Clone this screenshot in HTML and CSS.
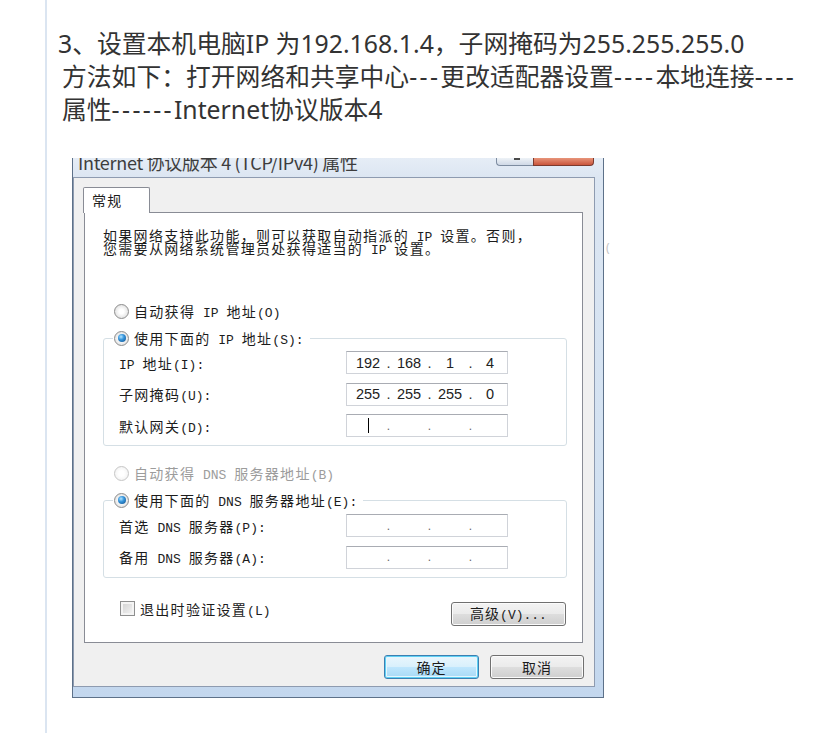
FILE: index.html
```html
<!DOCTYPE html>
<html lang="zh-CN">
<head>
<meta charset="utf-8">
<title>设置本机电脑IP</title>
<link rel="stylesheet" href="styles.css">
</head>
<body>
<div class="page">
  <p class="line">3、设置本机电脑IP 为192.168.1.4，子网掩码为255.255.255.0</p>
  <div class="method">
    <p class="line">方法如下：打开网络和共享中心<span class="dash">---</span>更改适配器设置<span class="dash">----</span>本地连接<span class="dash">----</span></p>
    <p class="line">属性<span class="dash">------</span>Internet协议版本4</p>
  </div>

  <div class="shot">
    <div class="window">
      <div class="titlebar">
        <span class="title">Internet 协议版本 4 (TCP/IPv4) 属性</span>
        <div class="tb-btns">
          <span class="tb-help"><i></i></span>
          <span class="tb-close"></span>
        </div>
      </div>
      <div class="client">
        <div class="tab">常规</div>
        <div class="panel">
          <div class="desc">
            <span class="dl">如果网络支持此功能，则可以获取自动指派的<span class="en"> IP </span>设置。否则，</span>
            <span class="dl">您需要从网络系统管理员处获得适当的<span class="en"> IP </span>设置。</span>
          </div>

          <div class="radio-row r1"><span class="radio"></span><span>自动获得<span class="en"> IP </span>地址<span class="en">(O)</span></span></div>
          <fieldset class="group g1">
            <legend><span class="radio on"></span><span>使用下面的<span class="en"> IP </span>地址<span class="en">(S):</span></span></legend>
            <div class="fields">
              <span class="lbl"><span class="en">IP </span>地址<span class="en">(I):</span></span>
              <div class="ipbox"><span>192</span><span class="dot">.</span><span>168</span><span class="dot">.</span><span>1</span><span class="dot">.</span><span>4</span></div>
              <span class="lbl">子网掩码<span class="en">(U):</span></span>
              <div class="ipbox"><span>255</span><span class="dot">.</span><span>255</span><span class="dot">.</span><span>255</span><span class="dot">.</span><span>0</span></div>
              <span class="lbl">默认网关<span class="en">(D):</span></span>
              <div class="ipbox empty"><span><i class="caret"></i></span><span class="dot">.</span><span></span><span class="dot">.</span><span></span><span class="dot">.</span><span></span></div>
            </div>
          </fieldset>

          <div class="radio-row r3 disabled"><span class="radio"></span><span>自动获得<span class="en"> DNS </span>服务器地址<span class="en">(B)</span></span></div>
          <fieldset class="group g2">
            <legend><span class="radio on"></span><span>使用下面的<span class="en"> DNS </span>服务器地址<span class="en">(E):</span></span></legend>
            <div class="fields">
              <span class="lbl">首选<span class="en"> DNS </span>服务器<span class="en">(P):</span></span>
              <div class="ipbox empty"><span></span><span class="dot">.</span><span></span><span class="dot">.</span><span></span><span class="dot">.</span><span></span></div>
              <span class="lbl">备用<span class="en"> DNS </span>服务器<span class="en">(A):</span></span>
              <div class="ipbox empty"><span></span><span class="dot">.</span><span></span><span class="dot">.</span><span></span><span class="dot">.</span><span></span></div>
            </div>
          </fieldset>

          <div class="bottom-row">
            <div class="check"><span class="box"></span><span>退出时验证设置<span class="en">(L)</span></span></div>
            <button class="btn adv">高级<span class="en">(V)...</span></button>
          </div>
        </div>
        <div class="actions">
          <button class="btn default">确定</button>
          <button class="btn cancel">取消</button>
        </div>
      </div>
    </div>
    <span class="edge">(</span>
  </div>
</div>
</body>
</html>
```

FILE: styles.css
```css
html, body {
  margin: 0;
  background: #ffffff;
}

.page {
  margin-left: 45px;
  border-left: 2px solid #dbe5f1;
  min-height: 733px;
  box-sizing: border-box;
  padding: 27px 0 0 11px;
  font-family: "Noto Sans", "Noto Sans CJK SC", sans-serif;
  font-size: 24.8px;
  line-height: 33px;
  color: #333333;
}

.line {
  margin: 0;
  white-space: nowrap;
}

.method {
  padding-left: 4px;
}

.dash {
  letter-spacing: 2.4px;
}

/* ---------- dialog screenshot ---------- */

.shot {
  display: flex;
  align-items: flex-start;
  margin: 32px 0 0 14px;
}

.edge {
  margin: 84px 0 0 2px;
  font-size: 12px;
  line-height: 12px;
  color: #c4c4c4;
}

.window {
  width: 532px;
  height: 540px;
  box-sizing: border-box;
  border: 1px solid #5d7189;
  border-top: none;
  padding: 0 8px 10px 0;
  background: linear-gradient(to bottom, #e6edf6 0px, #dce6f2 19px, #d2e1f1 60%, #c3d7ee 100%);
  display: flex;
  flex-direction: column;
  font-family: "Noto Sans CJK SC", sans-serif;
  color: #1c1c1c;
  line-height: normal;
}

.titlebar {
  height: 19px;
  flex: none;
  display: flex;
  overflow: hidden;
}

.title {
  font-size: 18px;
  line-height: 18px;
  letter-spacing: -0.3px;
  margin: -5px 0 0 5px;
  color: #3d3d3d;
  white-space: nowrap;
}

.tb-btns {
  margin-left: auto;
  margin-right: 1px;
  display: flex;
  align-items: flex-start;
}

.tb-help {
  width: 37px;
  height: 8px;
  box-sizing: border-box;
  border: 1px solid #7d8ca0;
  border-top: none;
  border-right: none;
  border-radius: 0 0 0 4px;
  background: linear-gradient(#eef2f7, #cfd9e6);
  display: flex;
  justify-content: center;
}

.tb-help i {
  width: 6px;
  height: 2px;
  background: #4a4a4a;
  margin-left: 4px;
}

.tb-close {
  width: 61px;
  height: 8px;
  box-sizing: border-box;
  border: 1px solid #7b3a2e;
  border-top: none;
  border-radius: 0 0 4px 0;
  background: linear-gradient(#e8957a, #c9553c);
}

.client {
  height: 510px;
  box-sizing: border-box;
  border: 1px solid #8e9bb0;
  background: #f0f0f0;
  padding-top: 9px;
  display: flex;
  flex-direction: column;
}

.tab {
  position: relative;
  z-index: 1;
  margin: 0 0 -1px 9px;
  width: 67px;
  height: 26px;
  box-sizing: border-box;
  border: 1px solid #898c95;
  border-bottom: none;
  border-radius: 2px 2px 0 0;
  background: #ffffff;
  padding-left: 8px;
  font-size: 14px;
  line-height: 24px;
  letter-spacing: 1.3px;
}

.panel {
  margin-left: 10px;
  width: 499px;
  height: 431px;
  box-sizing: border-box;
  border: 1px solid #898c95;
  background: #ffffff;
  padding: 18px 15px 0 18px;
  font-size: 14px;
  letter-spacing: 1.3px;
}

.en {
  font-family: "Liberation Mono", monospace;
  font-size: 13px;
  letter-spacing: 0;
  white-space: pre;
}

.desc {
  height: 26px;
  margin-top: -2px;
}

.dl {
  display: block;
  height: 13px;
  line-height: 12px;
  white-space: nowrap;
}

.radio-row {
  display: flex;
  align-items: center;
  gap: 5px;
  height: 26px;
  padding-left: 11px;
  white-space: nowrap;
}

.r1 {
  margin-top: 43px;
}

.r3 {
  margin-top: 14px;
}

.disabled {
  color: #9c9c9c;
}

.radio {
  flex: none;
  width: 15px;
  height: 15px;
  box-sizing: border-box;
  border-radius: 50%;
  border: 1px solid #8c8c8c;
  background: radial-gradient(circle at 50% 50%, #ffffff 25%, #d4d4d4 100%);
  display: flex;
  align-items: center;
  justify-content: center;
}

.radio.on::after {
  content: "";
  width: 8px;
  height: 8px;
  border-radius: 50%;
  background: radial-gradient(circle at 38% 35%, #b4e6ff 0%, #3795dc 40%, #0e4c86 100%);
}

.disabled .radio {
  border-color: #c6c6c6;
  background: radial-gradient(circle at 50% 50%, #ffffff 30%, #ececec 100%);
}

.group {
  margin: 1px 0 0;
  padding: 0 0 8px;
  border: 1px solid #d5dfe5;
  border-radius: 3px;
  min-width: 0;
}

.group legend {
  display: flex;
  align-items: center;
  gap: 5px;
  height: 26px;
  margin-left: 9px;
  padding: 0 6px 0 1px;
  white-space: nowrap;
}

.fields {
  display: grid;
  grid-template-columns: 227px 162px;
  row-gap: 8.5px;
  align-items: center;
  padding-left: 15px;
}

.g2 .fields {
  padding-top: 1px;
}

.lbl {
  white-space: nowrap;
}

.ipbox {
  height: 23px;
  box-sizing: border-box;
  border: 1px solid #d0d3d9;
  border-top-color: #a9acb3;
  background: #ffffff;
  padding-left: 3px;
  display: grid;
  grid-template-columns: 36px 5px 36px 5px 36px 5px 1fr;
  align-items: center;
  font-family: "Liberation Sans", sans-serif;
  font-size: 14.5px;
  letter-spacing: 0;
  color: #222222;
}

.ipbox span {
  text-align: center;
  display: flex;
  justify-content: center;
  align-items: center;
  height: 21px;
}

.ipbox .dot {
  color: #333333;
}

.ipbox.empty .dot {
  color: #666666;
  font-size: 12px;
}

.caret {
  width: 1px;
  height: 15px;
  background: #000000;
}

.bottom-row {
  display: flex;
  justify-content: space-between;
  align-items: flex-start;
  margin-top: 23px;
}

.check {
  display: flex;
  align-items: center;
  gap: 5px;
  height: 16px;
  padding-left: 17px;
  white-space: nowrap;
}

.box {
  flex: none;
  width: 15px;
  height: 15px;
  box-sizing: border-box;
  border: 1px solid #8e8f8f;
  background: linear-gradient(135deg, #cfcfcf, #f7f7f7);
  box-shadow: inset 0 0 0 2px #f4f4f4;
}

.btn {
  height: 24px;
  box-sizing: border-box;
  border: 1px solid #707070;
  border-radius: 3px;
  background: linear-gradient(#f3f3f3 0%, #ebebeb 48%, #dddddd 52%, #cfcfcf 100%);
  box-shadow: inset 0 0 0 1px #fbfbfb;
  font-family: "Noto Sans CJK SC", sans-serif;
  font-size: 14px;
  letter-spacing: 1px;
  color: #1c1c1c;
  padding: 0;
  line-height: 20px;
}

.adv {
  width: 115px;
  margin: 1px 1px 0 0;
}

.actions {
  display: flex;
  justify-content: flex-end;
  gap: 11px;
  margin: 12px 10px 0 0;
}

.default {
  width: 95px;
  border-color: #3c7fb1;
  background: linear-gradient(#eaf6fd 0%, #d9f0fc 48%, #bee6fd 52%, #a7d9f5 100%);
  box-shadow: inset 0 0 0 1px #5fd0f4, inset 0 0 0 2px #e6f6fd;
}

.cancel {
  width: 94px;
}
```
